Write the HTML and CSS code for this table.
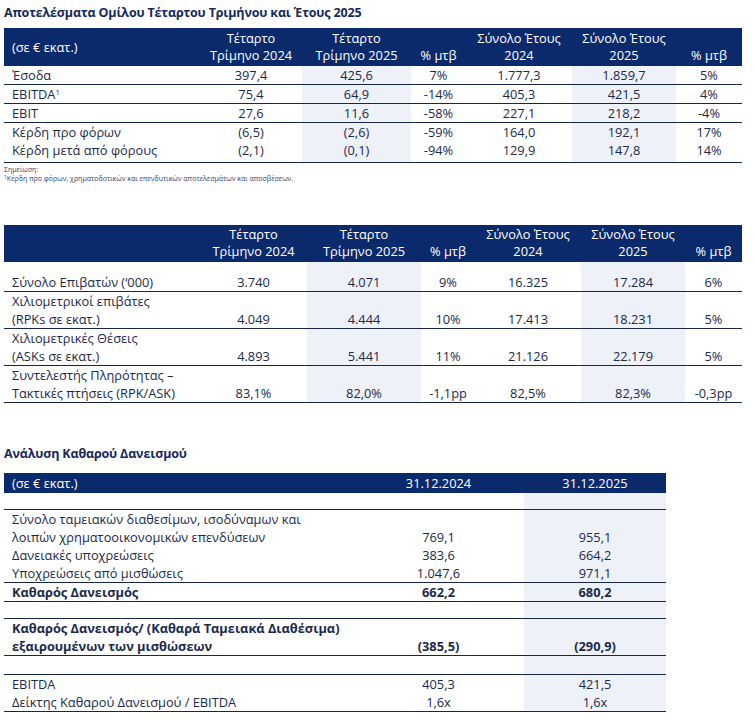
FILE: index.html
```html
<!DOCTYPE html>
<html lang="el">
<head>
<meta charset="utf-8">
<title>Αποτελέσματα Ομίλου</title>
<link rel="stylesheet" href="styles.css">
</head>
<body>
<div class="page">
  <h1 class="title">Αποτελέσματα Ομίλου Τέταρτου Τριμήνου και Έτους 2025</h1>
  <table class="t1">
    <colgroup>
      <col style="width:196px"><col style="width:102px"><col style="width:109px"><col style="width:55px"><col style="width:106px"><col style="width:104px"><col style="width:66px">
    </colgroup>
    <thead>
      <tr>
        <th class="lbl mid">(σε € εκατ.)</th>
        <th>Τέταρτο<br>Τρίμηνο 2024</th>
        <th>Τέταρτο<br>Τρίμηνο 2025</th>
        <th>% μτβ</th>
        <th>Σύνολο Έτους<br>2024</th>
        <th>Σύνολο Έτους<br>2025</th>
        <th>% μτβ</th>
      </tr>
    </thead>
    <tbody>
      <tr class="bd"><td class="lbl">Έσοδα</td><td>397,4</td><td class="shade">425,6</td><td>7%</td><td>1.777,3</td><td class="shade">1.859,7</td><td>5%</td></tr>
      <tr class="bd"><td class="lbl">EBITDA<sup>1</sup></td><td>75,4</td><td class="shade">64,9</td><td>-14%</td><td>405,3</td><td class="shade">421,5</td><td>4%</td></tr>
      <tr class="bd"><td class="lbl">EBIT</td><td>27,6</td><td class="shade">11,6</td><td>-58%</td><td>227,1</td><td class="shade">218,2</td><td>-4%</td></tr>
      <tr><td class="lbl">Κέρδη προ φόρων</td><td>(6,5)</td><td class="shade">(2,6)</td><td>-59%</td><td>164,0</td><td class="shade">192,1</td><td>17%</td></tr>
      <tr class="bd last"><td class="lbl">Κέρδη μετά από φόρους</td><td>(2,1)</td><td class="shade">(0,1)</td><td>-94%</td><td>129,9</td><td class="shade">147,8</td><td>14%</td></tr>
    </tbody>
  </table>
  <div class="notes">
    <p>Σημείωση:</p>
    <p><span class="fn">1</span>Κέρδη προ φόρων, χρηματοδοτικών και επενδυτικών αποτελεσμάτων και αποσβέσεων.</p>
  </div>

  <table class="t2">
    <colgroup>
      <col style="width:196px"><col style="width:107px"><col style="width:114px"><col style="width:54px"><col style="width:106px"><col style="width:104px"><col style="width:57px">
    </colgroup>
    <thead>
      <tr>
        <th></th>
        <th>Τέταρτο<br>Τρίμηνο 2024</th>
        <th>Τέταρτο<br>Τρίμηνο 2025</th>
        <th>% μτβ</th>
        <th>Σύνολο Έτους<br>2024</th>
        <th>Σύνολο Έτους<br>2025</th>
        <th>% μτβ</th>
      </tr>
    </thead>
    <tbody>
      <tr class="bd first"><td class="lbl">Σύνολο Επιβατών (‘000)</td><td>3.740</td><td class="shade">4.071</td><td>9%</td><td>16.325</td><td class="shade">17.284</td><td>6%</td></tr>
      <tr class="bd"><td class="lbl">Χιλιομετρικοί επιβάτες<br>(RPKs σε εκατ.)</td><td>4.049</td><td class="shade">4.444</td><td>10%</td><td>17.413</td><td class="shade">18.231</td><td>5%</td></tr>
      <tr class="bd"><td class="lbl">Χιλιομετρικές Θέσεις<br>(ASKs σε εκατ.)</td><td>4.893</td><td class="shade">5.441</td><td>11%</td><td>21.126</td><td class="shade">22.179</td><td>5%</td></tr>
      <tr class="bd"><td class="lbl">Συντελεστής Πληρότητας –<br>Τακτικές πτήσεις (RPK/ASK)</td><td>83,1%</td><td class="shade">82,0%</td><td>-1,1pp</td><td>82,5%</td><td class="shade">82,3%</td><td>-0,3pp</td></tr>
    </tbody>
  </table>

  <h2 class="title sub">Ανάλυση Καθαρού Δανεισμού</h2>
  <table class="t3">
    <colgroup>
      <col style="width:349px"><col style="width:171px"><col style="width:142px">
    </colgroup>
    <thead>
      <tr>
        <th class="lbl">(σε € εκατ.)</th>
        <th>31.12.2024</th>
        <th>31.12.2025</th>
      </tr>
    </thead>
    <tbody>
      <tr class="bd blank"><td></td><td></td><td class="shade"></td></tr>
      <tr><td class="lbl">Σύνολο ταμειακών διαθεσίμων, ισοδύναμων και<br>λοιπών χρηματοοικονομικών επενδύσεων</td><td>769,1</td><td class="shade">955,1</td></tr>
      <tr><td class="lbl">Δανειακές υποχρεώσεις</td><td>383,6</td><td class="shade">664,2</td></tr>
      <tr class="bd"><td class="lbl">Υποχρεώσεις από μισθώσεις</td><td>1.047,6</td><td class="shade">971,1</td></tr>
      <tr class="bd strong"><td class="lbl">Καθαρός Δανεισμός</td><td>662,2</td><td class="shade">680,2</td></tr>
      <tr class="bd blank"><td></td><td></td><td class="shade"></td></tr>
      <tr class="bd strong"><td class="lbl">Καθαρός Δανεισμός/ (Καθαρά Ταμειακά Διαθέσιμα)<br>εξαιρουμένων των μισθώσεων</td><td>(385,5)</td><td class="shade">(290,9)</td></tr>
      <tr class="bd blank2"><td></td><td></td><td class="shade"></td></tr>
      <tr><td class="lbl">EBITDA</td><td>405,3</td><td class="shade">421,5</td></tr>
      <tr class="bd"><td class="lbl">Δείκτης Καθαρού Δανεισμού / EBITDA</td><td>1,6x</td><td class="shade">1,6x</td></tr>
    </tbody>
  </table>
</div>
</body>
</html>
```

FILE: styles.css
```css
html, body {
  margin: 0;
  padding: 0;
  background: #ffffff;
}

body {
  font-family: "Open Sans", "Noto Sans", sans-serif;
  color: #1b2a4a;
}

.page {
  padding: 4px 0 0 4px;
}

.title {
  margin: 0 0 6px 0;
  font-size: 12.5px;
  line-height: 18px;
  font-weight: 700;
  color: #15295a;
  letter-spacing: -0.15px;
  white-space: nowrap;
}

.title.sub {
  margin: 42px 0 10px 0;
}

table {
  border-collapse: collapse;
  table-layout: fixed;
  font-size: 12.8px;
}

th {
  background: #0b2a6b;
  color: #ffffff;
  font-weight: 400;
  line-height: 17px;
  padding: 2px 0 2px 0;
  text-align: center;
  vertical-align: bottom;
  white-space: nowrap;
}

th.lbl {
  text-align: left;
  padding-left: 8px;
}

th.mid {
  vertical-align: middle;
}

td {
  padding: 0;
  line-height: 18px;
  height: 18px;
  text-align: center;
  vertical-align: bottom;
  white-space: nowrap;
}

td.lbl {
  text-align: left;
  padding-left: 8px;
}

.shade {
  background: #eef1f8;
}

tr.bd td {
  border-bottom: 1px solid #15274b;
}

sup {
  font-size: 0.6em;
  line-height: 0;
  vertical-align: 0.55em;
}

.t1 tr.last td {
  height: 21px;
  vertical-align: top;
}

.notes {
  margin-top: 2px;
  font-size: 7px;
  line-height: 9px;
  color: #33426a;
}

.notes p {
  margin: 0;
  white-space: nowrap;
}

.notes .fn {
  font-size: 5px;
  position: relative;
  top: -2px;
}

.t2 {
  margin-top: 41px;
}

.t2 th {
  padding: 1px 0 2px 0;
}

.t2 tr.first td {
  height: 29px;
}

.t3 th {
  line-height: 18px;
  padding: 1px 0 1px 0;
}

.t3 th.lbl {
  padding-left: 8px;
}

.t3 tr.blank td {
  height: 16px;
}

.t3 tr.blank2 td {
  height: 18px;
}

.t3 tr.strong td {
  font-weight: 700;
}
```
